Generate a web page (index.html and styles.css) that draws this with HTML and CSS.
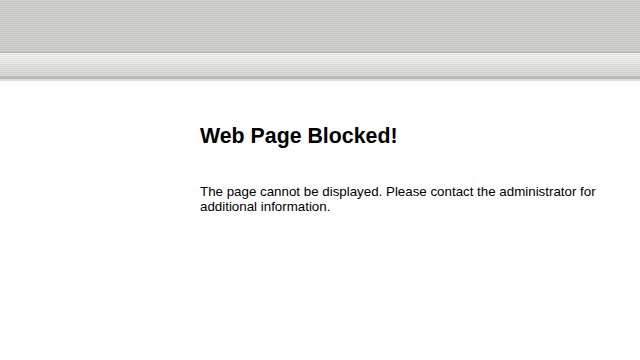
FILE: index.html
```html
<!DOCTYPE html>
<html>
<head>
<meta charset="utf-8">
<link rel="stylesheet" href="styles.css">
</head>
<body>
<div class="top"></div>
<div class="bar"></div>
<div class="content">
  <h1 class="title">Web Page Blocked!</h1>
  <p class="msg">The page cannot be displayed. Please contact the administrator for additional information.</p>
</div>
</body>
</html>
```
FILE: styles.css
```css
html, body { margin: 0; padding: 0; background: #fff; }
body { font-family: "Liberation Sans", Arial, sans-serif; color: #000; }
.top {
  height: 52px;
  background: repeating-linear-gradient(to bottom, #d0d0ce 0, #d0d0ce 1px, #c6c6c4 1px, #c6c6c4 2px);
  border-bottom: 1px solid #b4b4b2;
}
.bar {
  height: 23px;
  background:
    repeating-linear-gradient(to bottom, rgba(255,255,255,0.25) 0, rgba(255,255,255,0.25) 1px, rgba(0,0,0,0.03) 1px, rgba(0,0,0,0.03) 2px),
    linear-gradient(to bottom, #ecedeb 0, #e8e8e6 30%, #d8d8d6 70%, #d2d2d0 100%);
  border-bottom: 3px solid #b9b9b7;
  box-shadow: 0 2px 0 #dcdcdc;
}
.content {
  padding: 45px 0 0 200px;
  width: 420px;
}
.title {
  margin: 0;
  font-size: 21.33px;
  line-height: 25px;
  font-weight: bold;
}
.msg {
  margin: 35px 0 0 0;
  font-size: 13.33px;
  line-height: 15px;
}
```
